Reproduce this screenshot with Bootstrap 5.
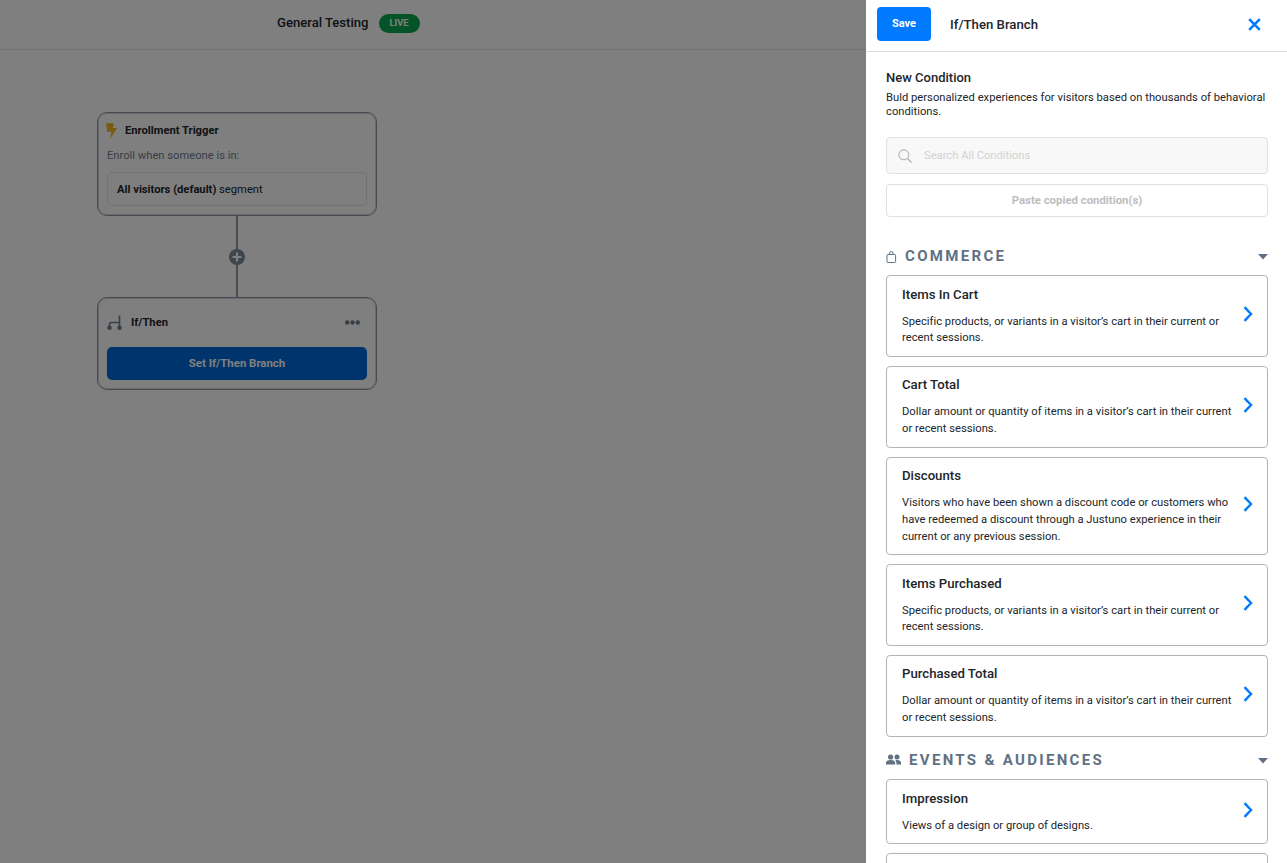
<!doctype html>
<html lang="en"><head><meta charset="utf-8"><title>If/Then Branch</title>
<link href="https://cdn.jsdelivr.net/npm/bootstrap@5.3.0/dist/css/bootstrap.min.css" rel="stylesheet">
<style>
html,body{height:100%;overflow:hidden}
body{font-family:Roboto,"Liberation Sans",sans-serif;color:#212529;background:#fff;font-size:11.2px}
.app-shell{height:863px}
.flow-side{width:866px;position:relative}
.dim-layer{position:absolute;inset:0;background:rgba(0,0,0,.5)}
.top-strip{height:50px;border-bottom:1px solid #dee2e6;font-size:13.1px;font-weight:500;padding-left:277px;padding-bottom:3px;gap:10px}
.top-name{margin-top:-1px}
.live-tag{width:41px;height:19px;border-radius:10px;background:#08a850;color:#fff;font-size:9.3px;font-weight:700}
.flow-canvas{padding:62px 0 0 97px}
.flow-node{width:280px;border:1px solid #8a97a3;box-shadow:inset 0 0 0 1px #d2d8de;border-radius:10px;padding:10px 9px 9px}
.node-title{font-size:11.2px;font-weight:700;line-height:16px;gap:8px}
.bolt-ico{margin-left:-2px}
.node-sub{font-size:11.2px;color:#6f7d8b;margin:9px 0 8px;line-height:16px}
.seg-box{border:1px solid #e2e6ea;border-radius:5px;font-size:11.2px;height:34px;padding:2px 0 0 9px}
.node-link{width:280px;height:81px;position:relative}
.link-line{width:2px;height:100%;background:#8e9aa6}
.link-plus{position:absolute;left:132px;top:32.5px}
.branch-row{height:16px;margin:6.5px 0 16.5px}
.branch-ico{margin-right:1px}
.more-ico{margin-left:auto;margin-right:7px}
.set-btn{background:#0069d9;color:#fff;font-size:11.4px;font-weight:700;height:33px;border-radius:5px;width:100%;border:0}
.side-panel{width:421px;background:#fff;z-index:2}
.panel-head{height:52px;border-bottom:1px solid #dcdcdc;padding:0 26px 0 11px}
.save-btn{width:54px;height:34px;margin-top:-3px;background:#007bff;color:#fff;font-size:11px;font-weight:700;border:0;border-radius:4px;padding:0}
.panel-title{font-size:13.2px;font-weight:500;margin:-2px 0 0 19px}
.close-ico{margin:-2px 0 0 auto}
.panel-body{padding:17px 19px 0 20px}
.new-title{font-size:13px;font-weight:500;line-height:18px}
.new-desc{line-height:14px;margin-top:4px;font-size:11.2px;letter-spacing:.02px}
.search-box{height:37px;margin-top:18px;background:#f8f8f8;border:1px solid #e0e0e0;border-radius:4px;padding-left:11px;gap:12px}
.search-box input{border:0;background:transparent;outline:0;font-size:11.2px;font-family:inherit;width:300px;padding:1px 0 0}
.search-box input::placeholder{color:#d2d2d2;opacity:1}
.paste-btn{height:33px;margin-top:10px;width:100%;background:#fff;border:1px solid #e0e0e0;border-radius:4px;color:#bdbdbd;font-size:11.36px;font-weight:700}
.cat-head{color:#5f7183;font-size:15px;font-weight:700;letter-spacing:2.32px;line-height:18px}
.cat-first{margin-top:30px;margin-bottom:10px}
.cat-next{margin-top:14px;margin-bottom:10.6px}
.cat-head svg.cat-ico{margin-right:8px}
.cat-caret{margin:2px 0 0 auto}
.bag-ico{margin-top:2px}
.cond-list{display:flex;flex-direction:column;gap:9px}
.cond-item{border:1px solid #b4b4b4;border-radius:4px;padding:10.5px 15px 8.7px;background:#fff;gap:8px}
.cond-item h3{font-size:13.2px;font-weight:500;line-height:16px;margin:0 0 11px}
.cond-item p{font-size:11.2px;line-height:16.8px;margin:0;letter-spacing:.02px}
.cond-text{flex:1 1 auto}
.cond-go{flex:0 0 auto;margin:0 -1px 5px 0}
.empty-item{height:40px}
</style></head>
<body>
<div class="app-shell d-flex">
  <div class="flow-side">
    <div class="top-strip d-flex align-items-center"><span class="top-name">General Testing</span><span class="live-tag d-inline-flex align-items-center justify-content-center">LIVE</span></div>
    <div class="flow-canvas">
      <div class="flow-node">
        <div class="node-title d-flex align-items-center">
          <svg class="bolt-ico" width="12" height="16" viewBox="0 0 12 16"><path fill="#f0b820" d="M1 .2h8L7.8 5H12L5 16l1.2-7.2H2.2z"/></svg>
          <span>Enrollment Trigger</span></div>
        <div class="node-sub">Enroll when someone is in:</div>
        <div class="seg-box d-flex align-items-center"><span><b class="fw-bold">All visitors (default)</b> segment</span></div>
      </div>
      <div class="node-link d-flex justify-content-center">
        <div class="link-line"></div>
        <svg class="link-plus" width="16" height="16" viewBox="0 0 16 16"><circle cx="8" cy="8" r="8" fill="#7f8c9a"/><path d="M8 3.5v9M3.5 8h9" stroke="#fff" stroke-width="2.2"/></svg>
      </div>
      <div class="flow-node">
        <div class="node-title branch-row d-flex align-items-center">
          <svg class="branch-ico" width="15" height="16" viewBox="0 0 15 16" fill="none"><path d="M12.5 .5v11M2.5 11.5V9.5q0-2 2-2H12.5" stroke="#6f7d8b" stroke-width="1.6"/><circle cx="2.5" cy="12.7" r="2.2" fill="#6f7d8b"/><circle cx="12.5" cy="12.7" r="2.2" fill="#6f7d8b"/></svg>
          <span>If/Then</span>
          <svg class="more-ico" width="15" height="5" viewBox="0 0 15 5"><circle cx="2.2" cy="2.5" r="2.2" fill="#6f7d8b"/><circle cx="7.5" cy="2.5" r="2.2" fill="#6f7d8b"/><circle cx="12.8" cy="2.5" r="2.2" fill="#6f7d8b"/></svg>
        </div>
        <button class="set-btn" type="button">Set If/Then Branch</button>
      </div>
    </div>
    <div class="dim-layer"></div>
  </div>
  <aside class="side-panel">
    <div class="panel-head d-flex align-items-center">
      <button class="save-btn" type="button">Save</button>
      <span class="panel-title">If/Then Branch</span>
      <svg class="close-ico" width="13" height="13" viewBox="0 0 13 13"><path d="M1.2 1.2l10.6 10.6M11.8 1.2L1.2 11.8" stroke="#007bff" stroke-width="2.6"/></svg>
    </div>
    <div class="panel-body">
      <div class="new-title">New Condition</div>
      <div class="new-desc">Buld personalized experiences for visitors based on thousands of behavioral conditions.</div>
      <div class="search-box d-flex align-items-center">
        <svg width="14" height="14" viewBox="0 0 14 14" fill="none"><circle cx="5.8" cy="5.8" r="5" stroke="#a9a9a9" stroke-width="1"/><path d="M9.5 9.5l4 4" stroke="#a9a9a9" stroke-width="1.1"/></svg>
        <input type="text" placeholder="Search All Conditions">
      </div>
      <button class="paste-btn" type="button">Paste copied condition(s)</button>

      <div class="cat-head cat-first d-flex align-items-center">
        <svg class="cat-ico bag-ico" width="11" height="12" viewBox="0 0 11 12" fill="none"><rect x="1" y="3.5" width="8.6" height="8" rx=".8" stroke="#5f7183" stroke-width="1"/><path d="M3.6 3.5V2.2a1.7 1.7 0 0 1 3.4 0v1.3" stroke="#5f7183"/></svg>
        <span>COMMERCE</span>
        <svg class="cat-caret" width="10" height="6" viewBox="0 0 10 6"><path d="M0 0h10L5 5.5z" fill="#5f7183"/></svg>
      </div>
      <div class="cond-list">
        <div class="cond-item d-flex align-items-center"><div class="cond-text"><h3>Items In Cart</h3><p>Specific products, or variants in a visitor’s cart in their current or recent sessions.</p></div><svg class="cond-go" width="10" height="16" viewBox="0 0 10 16" fill="none"><path d="M1.5 1.2L8 8l-6.5 6.8" stroke="#007bff" stroke-width="2.4"/></svg></div>
        <div class="cond-item d-flex align-items-center"><div class="cond-text"><h3>Cart Total</h3><p>Dollar amount or quantity of items in a visitor’s cart in their current or recent sessions.</p></div><svg class="cond-go" width="10" height="16" viewBox="0 0 10 16" fill="none"><path d="M1.5 1.2L8 8l-6.5 6.8" stroke="#007bff" stroke-width="2.4"/></svg></div>
        <div class="cond-item d-flex align-items-center"><div class="cond-text"><h3>Discounts</h3><p>Visitors who have been shown a discount code or customers who have redeemed a discount through a Justuno experience in their current or any previous session.</p></div><svg class="cond-go" width="10" height="16" viewBox="0 0 10 16" fill="none"><path d="M1.5 1.2L8 8l-6.5 6.8" stroke="#007bff" stroke-width="2.4"/></svg></div>
        <div class="cond-item d-flex align-items-center"><div class="cond-text"><h3>Items Purchased</h3><p>Specific products, or variants in a visitor’s cart in their current or recent sessions.</p></div><svg class="cond-go" width="10" height="16" viewBox="0 0 10 16" fill="none"><path d="M1.5 1.2L8 8l-6.5 6.8" stroke="#007bff" stroke-width="2.4"/></svg></div>
        <div class="cond-item d-flex align-items-center"><div class="cond-text"><h3>Purchased Total</h3><p>Dollar amount or quantity of items in a visitor’s cart in their current or recent sessions.</p></div><svg class="cond-go" width="10" height="16" viewBox="0 0 10 16" fill="none"><path d="M1.5 1.2L8 8l-6.5 6.8" stroke="#007bff" stroke-width="2.4"/></svg></div>
      </div>
      <div class="cat-head cat-next d-flex align-items-center">
        <svg class="cat-ico" width="15" height="11" viewBox="0 0 15 11"><circle cx="4.6" cy="3" r="2.6" fill="#5f7183"/><circle cx="11" cy="3" r="2.5" fill="#5f7183"/><path d="M0 10.5V8.8c0-2 1.8-2.9 4.6-2.9s4.6.9 4.6 2.9v1.7zM10.4 10.5V8.8c0-1-.4-2-1.2-2.6.5-.2 1.1-.3 1.9-.3 2.3 0 3.9.9 3.9 2.6v2z" fill="#5f7183"/></svg>
        <span>EVENTS &amp; AUDIENCES</span>
        <svg class="cat-caret" width="10" height="6" viewBox="0 0 10 6"><path d="M0 0h10L5 5.5z" fill="#5f7183"/></svg>
      </div>
      <div class="cond-list">
        <div class="cond-item d-flex align-items-center"><div class="cond-text"><h3>Impression</h3><p>Views of a design or group of designs.</p></div><svg class="cond-go" width="10" height="16" viewBox="0 0 10 16" fill="none"><path d="M1.5 1.2L8 8l-6.5 6.8" stroke="#007bff" stroke-width="2.4"/></svg></div>
        <div class="cond-item empty-item"></div>
      </div>
    </div>
  </aside>
</div>
<script src="https://cdn.jsdelivr.net/npm/bootstrap@5.3.0/dist/js/bootstrap.bundle.min.js"></script>
</body></html>
